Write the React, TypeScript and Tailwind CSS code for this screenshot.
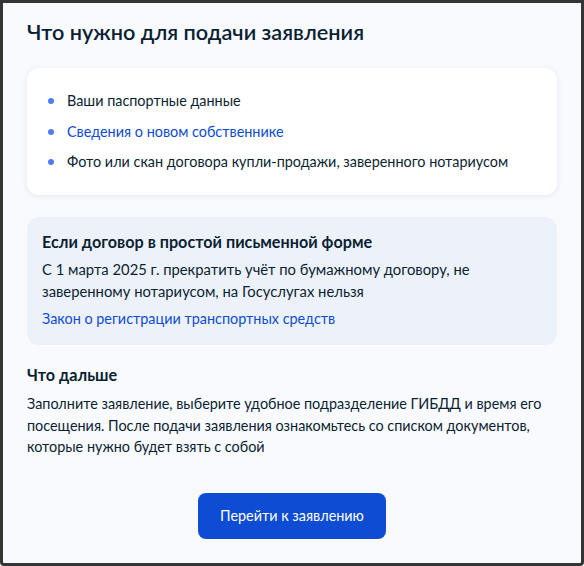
import React from "react";

const items = [
  { text: "Ваши паспортные данные", link: false },
  { text: "Сведения о новом собственнике", link: true },
  { text: "Фото или скан договора купли-продажи, заверенного нотариусом", link: false },
];

export default function App() {
  return (
    <div
      className="w-[584px] h-[566px] border-[3px] border-[#353535] rounded-b-[4px] bg-[#f9fafe] text-[#0b1f33] px-6 pt-[15px] pb-6 flex flex-col"
      style={{ fontFamily: "Lato, 'Noto Sans', sans-serif" }}
    >
      <h2 className="text-[21.7px] leading-[28px] font-semibold">Что нужно для подачи заявления</h2>

      <div className="mt-[22px] bg-white rounded-xl shadow-[0_1px_6px_rgba(11,31,51,0.08)] pl-[21px] pr-6 py-[23px] flex flex-col gap-[10.5px]">
        {items.map((it) => (
          <div key={it.text} className="flex items-center gap-[13px] text-[14.4px] leading-5">
            <span className="w-1.5 h-1.5 rounded-full bg-[#4f7bf7] shrink-0" />
            <span className={it.link ? "text-[#0d4cd3]" : ""}>{it.text}</span>
          </div>
        ))}
      </div>

      <div className="mt-[22px] bg-[#edf2fa] rounded-xl px-[15px] pt-[13px] pb-[15px]">
        <div className="text-[16.2px] leading-6 font-bold">Если договор в простой письменной форме</div>
        <p className="mt-1 text-[14.8px] leading-[22px]">
          С 1 марта 2025 г. прекратить учёт по бумажному договору, не заверенному нотариусом, на Госуслугах нельзя
        </p>
        <a className="mt-[6px] block text-[14.4px] leading-[22px] text-[#0d4cd3]">Закон о регистрации транспортных средств</a>
      </div>

      <div className="mt-[18px] text-[16.2px] leading-6 font-bold">Что дальше</div>
      <p className="mt-[6px] text-[14.4px] leading-[21.5px]">
        Заполните заявление, выберите удобное подразделение ГИБДД и время его посещения. После подачи заявления ознакомьтесь со списком документов, которые нужно будет взять с собой
      </p>

      <div className="mt-auto flex justify-center">
        <button className="w-[188px] h-[46px] rounded-lg bg-[#0d4cd3] text-white text-[14.4px]">Перейти к заявлению</button>
      </div>
    </div>
  );
}
